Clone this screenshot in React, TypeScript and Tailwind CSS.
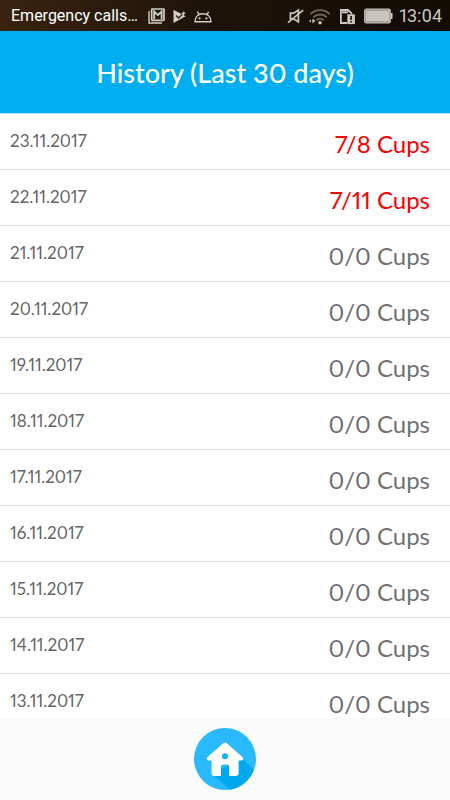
type Day = {
  date: string;
  drunk: number;
  goal: number;
};

const days: Day[] = [
  { date: '23.11.2017', drunk: 7, goal: 8 },
  { date: '22.11.2017', drunk: 7, goal: 11 },
  { date: '21.11.2017', drunk: 0, goal: 0 },
  { date: '20.11.2017', drunk: 0, goal: 0 },
  { date: '19.11.2017', drunk: 0, goal: 0 },
  { date: '18.11.2017', drunk: 0, goal: 0 },
  { date: '17.11.2017', drunk: 0, goal: 0 },
  { date: '16.11.2017', drunk: 0, goal: 0 },
  { date: '15.11.2017', drunk: 0, goal: 0 },
  { date: '14.11.2017', drunk: 0, goal: 0 },
  { date: '13.11.2017', drunk: 0, goal: 0 },
];

function NotificationIcons() {
  return (
    <div className="ml-[10px] flex items-center gap-2 text-[#d3cfc9]">
      {/* mail */}
      <svg width="17" height="16" viewBox="0 0 17 16" fill="none" stroke="currentColor">
        <path d="M1 3v12H14" strokeWidth="1.4" />
        <rect x="3.7" y="1" width="12.3" height="11.4" rx="0.6" strokeWidth="1.7" />
        <path d="M6.2 11V3.5l3.7 3.6 3.7-3.6V11" strokeWidth="1.8" />
      </svg>
      {/* play protect */}
      <svg width="13" height="15" viewBox="0 0 13 15">
        <path d="M0.5 0.8 12.6 7.3 0.5 14 Z" fill="currentColor" />
        <path d="M3 6.6 5.6 9 12 2.6" fill="none" stroke="#2b1b0c" strokeWidth="1.3" />
        <path d="M8.6 4.4 10.6 2.6 12.4 4.2 10 6.2Z" fill="currentColor" />
      </svg>
      {/* android */}
      <svg width="18" height="13" viewBox="0 0 18 13" fill="none" stroke="currentColor" strokeWidth="1.4">
        <path d="M1 11.8C1.2 6.6 4.6 3.8 9 3.8s7.8 2.8 8 8Z" />
        <path d="M5 4.8 3.4 1.6M13 4.8l1.6-3.2" />
        <circle cx="5.6" cy="8.3" r="1.1" fill="currentColor" stroke="none" />
        <circle cx="12.4" cy="8.3" r="1.1" fill="currentColor" stroke="none" />
      </svg>
    </div>
  );
}

function SystemIcons() {
  return (
    <div className="ml-auto flex items-center text-[#c9c6c1]">
      {/* muted */}
      <svg width="17" height="16" viewBox="0 0 17 16" fill="none" stroke="currentColor" strokeWidth="1.7">
        <path d="M3.4 5.2h3.2L11.4 2v12L6.6 10.8H3.4Z" />
        <path d="M1 14.6 16.2 2.2" />
      </svg>
      {/* wifi */}
      <svg className="ml-1" width="23" height="17" viewBox="0 0 23 17" fill="none" strokeWidth="1.9">
        <g stroke="#6d665d">
          <path d="M2.4 6.2C7.6.7 16.6.7 21.8 6.2" />
          <path d="M5.4 9.3c3.7-3.7 9.7-3.7 13.4 0" />
          <path d="M8.4 12.3c2.1-2 5.3-2 7.4 0" />
        </g>
        <circle cx="12" cy="14.8" r="1.8" fill="currentColor" />
        <path d="M4.4 10.5v5L7.4 13ZM3 11.5v3L1 13Z" fill="currentColor" />
      </svg>
      {/* sim alert */}
      <svg className="ml-2" width="17" height="17" viewBox="0 0 17 17" fill="none" stroke="currentColor">
        <path d="M8 15H1.9V2H9l3.3 3.2V6" strokeWidth="1.8" />
        <path d="M3 4.3h6" strokeWidth="2" />
        <rect x="8.3" y="6.3" width="7.6" height="9.8" fill="currentColor" stroke="none" />
        <path d="M12.1 8v4M12.1 13v1.6" stroke="#171008" strokeWidth="1.6" />
      </svg>
      {/* battery */}
      <svg className="ml-2" width="29" height="16" viewBox="0 0 29 16">
        <rect x="0.7" y="1.2" width="25.6" height="13.6" rx="1.6" fill="#8d8983" stroke="currentColor" strokeWidth="1.2" />
        <rect x="2" y="2.6" width="23" height="10.8" fill="currentColor" />
        <rect x="26.5" y="5" width="2" height="6" fill="currentColor" />
      </svg>
    </div>
  );
}

function StatusBar() {
  return (
    <div className="flex h-[31px] shrink-0 items-center bg-linear-to-r from-[#3a2310] via-[#1c1208] to-[#120c05] pr-2 pl-[11px] pt-px font-['Roboto',sans-serif]">
      <span className="text-base text-white">Emergency calls…</span>
      <NotificationIcons />
      <SystemIcons />
      <span className="ml-[6px] text-lg text-[#c9c6c1]">13:04</span>
    </div>
  );
}

function HomeIcon() {
  return (
    <svg className="size-full" viewBox="0 0 62 62">
      <defs>
        <clipPath id="disc">
          <circle cx="31" cy="31" r="31" />
        </clipPath>
      </defs>
      <circle cx="31" cy="31" r="31" fill="#29b9ff" />
      {/* long shadow */}
      <path d="M48 30 70 52 50 74 18 46Z" fill="#00a9ef" clipPath="url(#disc)" />
      <path
        d="M29.2 15.3a2.6 2.6 0 0 1 3.6 0L48.4 29c1.6 1.6.8 3.6-1.4 3.6h-2.4V45a3 3 0 0 1-3 3H35V38.5a2 2 0 0 0-2-2h-4a2 2 0 0 0-2 2V48h-6.4a3 3 0 0 1-3-3V32.6H15c-2.2 0-3-2-1.4-3.6Z"
        fill="#fff"
      />
      <circle cx="31" cy="28.2" r="3" fill="#14b0f7" />
    </svg>
  );
}

function DayRow({ day }: { day: Day }) {
  // days with a goal that was missed are shown in red
  const missed = day.drunk < day.goal;

  return (
    <li className="flex h-14 items-center justify-between border-b border-[#dcdcdc] pr-5 pl-[10px]">
      <span className="pb-0.5 text-[17px] text-[#666]">{day.date}</span>
      <span className={`pt-1 text-2xl ${missed ? 'text-[#fb0000]' : 'text-[#707070]'}`}>
        {day.drunk}/{day.goal} Cups
      </span>
    </li>
  );
}

export default function App() {
  return (
    <div className="flex h-screen flex-col bg-white font-['Lato',sans-serif] proportional-nums">
      <StatusBar />
      <header className="flex shrink-0 justify-center border-b border-[#c3dff0] bg-[#00aef0] pt-[26px] pb-6">
        <h1 className="text-[27px] leading-8 font-medium text-white">History (Last 30 days)</h1>
      </header>
      <ul className="min-h-0 flex-1 overflow-y-auto [scrollbar-width:none]">
        {days.map(day => (
          <DayRow key={day.date} day={day} />
        ))}
      </ul>
      <nav className="flex shrink-0 justify-center bg-[#fafafa] py-[10px]">
        <button type="button" aria-label="Home" className="size-[62px] rounded-full">
          <HomeIcon />
        </button>
      </nav>
    </div>
  );
}
